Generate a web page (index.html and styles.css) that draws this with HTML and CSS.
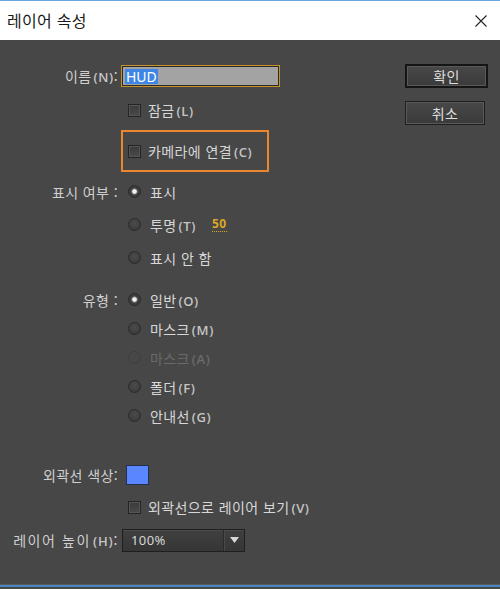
FILE: index.html
```html
<!DOCTYPE html>
<html lang="ko">
<head>
<meta charset="utf-8">
<link rel="stylesheet" href="styles.css">
</head>
<body>
<div class="window">
  <div class="titlebar">
    <span class="title">레이어 속성</span>
    <svg class="close" width="12" height="12" viewBox="0 0 12 12"><path d="M0.5 0.5 L11.5 11.5 M11.5 0.5 L0.5 11.5" stroke="#222" stroke-width="1.1" fill="none"/></svg>
  </div>
  <div class="body">
    <div class="form">
      <div class="row r-name">
        <div class="lbl">이름<span class="mn">(N)</span>:</div>
        <div class="input"><span class="sel">HUD</span></div>
      </div>
      <div class="row r-lock">
        <div class="lbl"></div>
        <span class="cb"></span><span class="txt">잠금<span class="mn">(L)</span></span>
      </div>
      <div class="row r-cam">
        <div class="lbl"></div>
        <div class="focusbox"><span class="cb"></span><span class="txt">카메라에 연결<span class="mn">(C)</span></span></div>
      </div>
      <div class="group g-vis">
        <div class="row r-vis">
          <div class="lbl">표시 여부 :</div>
          <span class="rb on"></span><span class="txt">표시</span>
        </div>
        <div class="row r-vis">
          <div class="lbl"></div>
          <span class="rb"></span><span class="txt">투명<span class="mn">(T)</span></span><span class="num">50</span>
        </div>
        <div class="row r-vis">
          <div class="lbl"></div>
          <span class="rb"></span><span class="txt">표시 안 함</span>
        </div>
      </div>
      <div class="group g-type">
        <div class="row r-type">
          <div class="lbl">유형 :</div>
          <span class="rb on"></span><span class="txt">일반<span class="mn">(O)</span></span>
        </div>
        <div class="row r-type">
          <div class="lbl"></div>
          <span class="rb"></span><span class="txt">마스크<span class="mn">(M)</span></span>
        </div>
        <div class="row r-type disabled">
          <div class="lbl"></div>
          <span class="rb"></span><span class="txt">마스크<span class="mn">(A)</span></span>
        </div>
        <div class="row r-type">
          <div class="lbl"></div>
          <span class="rb"></span><span class="txt">폴더<span class="mn">(F)</span></span>
        </div>
        <div class="row r-type">
          <div class="lbl"></div>
          <span class="rb"></span><span class="txt">안내선<span class="mn">(G)</span></span>
        </div>
      </div>
      <div class="row r-color">
        <div class="lbl">외곽선 색상:</div>
        <span class="swatch"></span>
      </div>
      <div class="row r-view">
        <div class="lbl"></div>
        <span class="cb"></span><span class="txt">외곽선으로 레이어 보기<span class="mn">(V)</span></span>
      </div>
      <div class="row r-height">
        <div class="lbl wide">레이어 높이<span class="mn">(H)</span>:</div>
        <div class="select"><span class="val">100%</span><span class="arrow"><svg width="9" height="6" viewBox="0 0 9 6"><path d="M0 0 H9 L4.5 6 Z" fill="#d8d8d8"/></svg></span></div>
      </div>
    </div>
    <div class="buttons">
      <div class="btn default">확인</div>
      <div class="btn">취소</div>
    </div>
  </div>
  <div class="edge"></div>
</div>
</body>
</html>
```

FILE: styles.css
```css
html, body {
  margin: 0;
  padding: 0;
  background: #474747;
}
body {
  width: 500px;
  height: 589px;
  overflow: hidden;
  font-family: "Noto Sans CJK KR", "Noto Sans", sans-serif;
  font-size: 14px;
  letter-spacing: 0.4px;
  color: #d2d2d2;
}
.window {
  width: 500px;
  height: 589px;
  display: flex;
  flex-direction: column;
}
.titlebar {
  height: 39px;
  background: #ffffff;
  border-top: 1px solid #6aa6dc;
  display: flex;
  align-items: center;
  justify-content: space-between;
  padding: 0 12px 0 7px;
}
.title {
  font-size: 16px;
  letter-spacing: 0.3px;
  color: #1a1a1a;
  margin-top: -1px;
}
.close {
  display: block;
  margin-right: 1px;
}
.body {
  height: 544px;
  background: #474747;
  display: flex;
}
.form {
  width: 405px;
  display: flex;
  flex-direction: column;
}
.row {
  display: flex;
  align-items: center;
  white-space: nowrap;
}
.lbl {
  width: 118px;
  padding-right: 3px;
  text-align: right;
  flex: none;
  color: #cfcfcf;
}
.lbl.wide {
  letter-spacing: 1.6px;
  padding-right: 2px;
  width: 119px;
}
.lbl.wide .mn {
  letter-spacing: 0.8px;
}
.mn {
  font-family: "Open Sans", "Noto Sans", sans-serif;
  font-size: 13px;
  font-weight: 600;
  letter-spacing: 0.6px;
  margin-left: 2px;
  color: #c4c4c4;
}
.r-name {
  margin-top: 24px;
  height: 24px;
}
.input {
  width: 151px;
  height: 20px;
  background: #a3a3a3;
  border: 1px solid #c8922a;
  box-shadow: inset 0 0 0 1px #2c2a26;
  padding: 0 3px;
  display: flex;
  align-items: center;
}
.sel {
  background: #3f85e6;
  color: #fff;
  font-family: "Noto Sans", sans-serif;
  font-size: 14px;
  letter-spacing: 0;
  line-height: 15px;
  padding: 0 1px;
}
.r-lock {
  margin-top: 11px;
  height: 22px;
}
.cb {
  width: 11px;
  height: 11px;
  border: 1px solid #252525;
  background: linear-gradient(#3a3a3a, #4a4a4a);
  box-shadow: inset 0 0 0 1px #555;
  margin-left: 7px;
  flex: none;
}
.txt {
  margin-left: 7px;
  color: #d8d8d8;
}
.r-cam {
  margin-top: 9px;
  height: 42px;
}
.focusbox {
  width: 144px;
  height: 38px;
  border: 2px solid #ea8530;
  display: flex;
  align-items: center;
}
.focusbox .cb {
  margin-left: 5px;
}
.group {
  display: flex;
  flex-direction: column;
}
.g-vis {
  margin-top: 3px;
}
.r-vis {
  height: 33px;
}
.rb {
  width: 13px;
  height: 13px;
  border-radius: 50%;
  box-sizing: border-box;
  border: 1px solid #2a2a2a;
  background: radial-gradient(circle at 50% 40%, #4c4c4c, #363636);
  margin-left: 7px;
  flex: none;
}
.rb.on {
  background: radial-gradient(circle, #f2f2f2 0 1.8px, #9a9a9a 2.4px, #3e3e3e 3.5px, #3a3a3a);
}
.rb + .txt {
  margin-left: 9px;
}
.num {
  margin-left: 16px;
  color: #dba628;
  font-family: "Open Sans", "Noto Sans", sans-serif;
  font-weight: 700;
  font-size: 12px;
  letter-spacing: 0.5px;
  border-bottom: 1px dotted #dba628;
  line-height: 14px;
}
.g-type {
  margin-top: 11px;
}
.r-type {
  height: 29px;
}
.disabled .txt, .disabled .mn {
  color: #6a6a6a;
}
.disabled .rb {
  background: #474747;
  border-color: #3e3e3e;
}
.r-color {
  margin-top: 31px;
  height: 28px;
}
.swatch {
  width: 21px;
  height: 18px;
  margin-left: 5px;
  background: #5a86ff;
  border: 1px solid #22304e;
}
.r-view {
  margin-top: 4px;
  height: 28px;
}
.r-height {
  margin-top: 7px;
  height: 24px;
}
.select {
  margin-left: 1px;
  width: 121px;
  height: 21px;
  border: 1px solid #1f1f1f;
  background: linear-gradient(#3f3f3f, #363636);
  box-shadow: inset 0 1px 0 #4c4c4c;
  display: flex;
  align-items: center;
}
.val {
  flex: 1;
  padding-left: 8px;
  font-family: "Noto Sans", sans-serif;
  font-size: 13px;
  color: #d6d6d6;
}
.arrow {
  width: 20px;
  height: 21px;
  border-left: 1px solid #2a2a2a;
  box-shadow: inset 1px 0 0 #4a4a4a;
  display: flex;
  align-items: center;
  justify-content: center;
}
.arrow svg {
  display: block;
}
.buttons {
  display: flex;
  flex-direction: column;
  gap: 13px;
  padding-top: 24px;
}
.btn {
  width: 78px;
  height: 22px;
  border: 1px solid #1e1e1e;
  background: linear-gradient(#484848, #3a3a3a);
  box-shadow: inset 0 0 0 1px #595959;
  display: flex;
  align-items: center;
  justify-content: center;
  color: #dedede;
  font-size: 14px;
}
.btn.default {
  width: 79px;
  border: 2px solid #151515;
  height: 20px;
}
.edge {
  height: 2px;
  background: #4a86c4;
  border-top: 1px solid #5a5a5a;
}
```
